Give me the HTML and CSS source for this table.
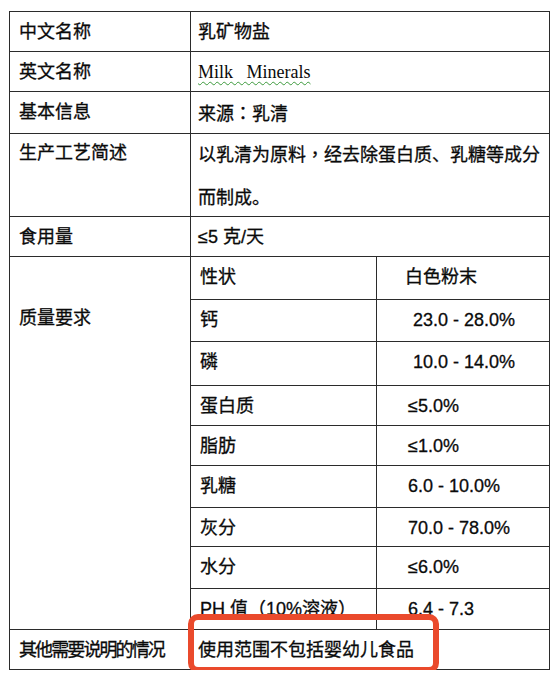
FILE: index.html
```html
<!DOCTYPE html>
<html lang="zh-CN">
<head>
<meta charset="utf-8">
<title>乳矿物盐</title>
<link rel="stylesheet" href="styles.css">
</head>
<body>
<div class="page">
  <table class="spec">
    <colgroup>
      <col class="c1"><col class="c2"><col class="c3">
    </colgroup>
    <tr class="h40"><td class="lab">中文名称</td><td class="val" colspan="2">乳矿物盐</td></tr>
    <tr class="h40"><td class="lab">英文名称</td><td class="val" colspan="2"><span class="en">Milk&nbsp;&nbsp;&nbsp;Minerals</span></td></tr>
    <tr class="h42"><td class="lab">基本信息</td><td class="val" colspan="2">来源<span class="pc" lang="zh-TW">：</span>乳清</td></tr>
    <tr class="h81"><td class="lab two">生产工艺简述</td><td class="val two" colspan="2"><div class="line first">以乳清为原料<span class="pc" lang="zh-TW">，</span>经去除蛋白质、乳糖等成分</div><div class="line">而制成。</div></td></tr>
    <tr class="h40"><td class="lab">食用量</td><td class="val" colspan="2">≤5 克/天</td></tr>
    <tr class="h43"><td class="lab quality" rowspan="9">质量要求</td><td class="sub">性状</td><td class="num cn">白色粉末</td></tr>
    <tr class="h42"><td class="sub">钙</td><td class="num">&nbsp;23.0 - 28.0%</td></tr>
    <tr class="h44"><td class="sub">磷</td><td class="num">&nbsp;10.0 - 14.0%</td></tr>
    <tr class="h40"><td class="sub">蛋白质</td><td class="num">≤5.0%</td></tr>
    <tr class="h40"><td class="sub">脂肪</td><td class="num">≤1.0%</td></tr>
    <tr class="h42"><td class="sub">乳糖</td><td class="num">6.0 - 10.0%</td></tr>
    <tr class="h39"><td class="sub">灰分</td><td class="num">70.0 - 78.0%</td></tr>
    <tr class="h42"><td class="sub">水分</td><td class="num">≤6.0%</td></tr>
    <tr class="h41"><td class="sub">PH 值（10%溶液）</td><td class="num">6.4 - 7.3</td></tr>
    <tr class="h40"><td class="lab tight">其他需要说明的情况</td><td class="val" colspan="2">使用范围不包括婴幼儿食品</td></tr>
  </table>
  <div class="highlight"></div>
</div>
</body>
</html>
```

FILE: styles.css
```css
html, body {
  margin: 0;
  padding: 0;
  background: #ffffff;
}

.page {
  position: relative;
  padding: 11px 0 0 9px;
  font-family: "Liberation Sans", "Noto Sans CJK SC", sans-serif;
  font-size: 18px;
  font-weight: 400;
  color: #0a0a0a;
  -webkit-text-stroke: 0.3px #0a0a0a;
}

.spec {
  border-collapse: collapse;
  table-layout: fixed;
  width: 540px;
}

.c1 { width: 181px; }
.c2 { width: 186px; }
.c3 { width: 173px; }

.spec td {
  border: 1px solid #2b2b2b;
  vertical-align: top;
  padding: 2px 0 0 0;
  line-height: 36px;
  white-space: nowrap;
  overflow: hidden;
}

.h39 { height: 39px; }
.h40 { height: 40px; }
.h41 { height: 41px; }
.h42 { height: 42px; }
.h43 { height: 43px; }
.h44 { height: 44px; }
.h81 { height: 81px; }

.spec td.lab { padding-left: 9px; }
.spec td.val { padding-left: 7px; }
.spec td.sub { padding-left: 9px; }
.spec td.num { padding-left: 31px; }
.spec td.num.cn { padding-left: 28px; }

.spec td.two { padding-top: 1px; }
.line.first { margin-bottom: 7px; }

.spec td.quality { padding-top: 43px; }

.spec td.tight { letter-spacing: -1.9px; }

.pc {
  font-family: "Noto Sans CJK TC", sans-serif;
}

.en {
  font-family: "Liberation Serif", serif;
  font-size: 18px;
  -webkit-text-stroke: 0;
  text-decoration: underline wavy #3c9a3c;
  text-decoration-thickness: 1px;
  text-underline-offset: 3px;
}

.highlight {
  position: absolute;
  left: 188px;
  top: 614px;
  width: 251px;
  height: 59px;
  box-sizing: border-box;
  border: 6px solid #ea4a2c;
  border-radius: 10px;
}
```
